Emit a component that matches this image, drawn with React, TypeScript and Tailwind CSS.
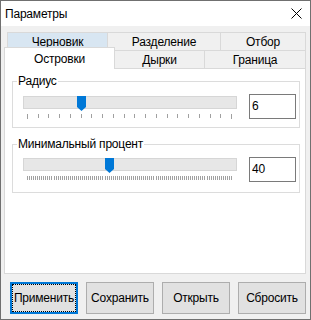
import React from "react";

function Ticks({ count, width, long }: { count: number; width: number; long: boolean }) {
  const span = width - 10;
  const xs: number[] = [];
  for (let i = 0; i < count; i++) xs.push(Math.round(4 + (i * span) / (count - 1)) + 0.5);
  return (
    <svg width={width} height={6} className="block">
      {xs.map((x, i) => (
        <line
          key={i}
          x1={x}
          x2={x}
          y1={0}
          y2={long && (i === 0 || i === count - 1) ? 5 : 4}
          stroke="#a0a0a0"
          strokeWidth={1}
        />
      ))}
    </svg>
  );
}

function Slider({ count, value, min, max }: { count: number; value: number; min: number; max: number }) {
  const width = 214;
  const pos = 4 + ((value - min) / (max - min)) * (width - 10);
  return (
    <div className="w-[214px] flex flex-col">
      <div className="relative h-[13px] bg-[#e7e7e7] border border-[#d6d6d6]">
        <svg
          width="9"
          height="15"
          viewBox="0 0 9 15"
          className="absolute top-[-1px]"
          style={{ left: Math.round(pos) - 5 }}
        >
          <polygon points="0,0 9,0 9,11 4.5,15 0,11" fill="#0078d7" />
        </svg>
      </div>
      <div className="mt-[5px]">
        <Ticks count={count} width={width} long={count < 50} />
      </div>
    </div>
  );
}

function Group({
  label,
  children,
  className,
}: {
  label: string;
  children: React.ReactNode;
  className: string;
}) {
  return (
    <div className={"relative ml-[7px] w-[288px] border border-[#dcdcdc] " + className}>
      <span className="absolute left-[4px] top-[-8px] bg-white px-[1px] leading-[14px]">{label}</span>
      {children}
    </div>
  );
}

function NumBox({ value }: { value: string }) {
  return (
    <div className="w-[47px] h-[25px] border border-[#7a7a7a] bg-white pl-[2px] pt-[4px] leading-[14px]">
      {value}
    </div>
  );
}

function Button({ label, focused }: { label: string; focused?: boolean }) {
  return (
    <div
      className={
        "w-[68px] h-[32px] flex items-center justify-center bg-[#e1e1e1] " +
        (focused
          ? "border-2 border-[#0078d7] outline-1 outline-dotted outline-black -outline-offset-[3px]"
          : "border border-[#adadad]")
      }
    >
      {label}
    </div>
  );
}

export default function App() {
  return (
    <div className="w-[311px] h-[320px] border border-[#707070] bg-[#f0f0f0] flex flex-col font-['Liberation_Sans',Arial,sans-serif] text-[12px] tracking-[-0.2px] text-black leading-none">
      <div className="h-[25px] shrink-0 bg-white flex items-center justify-between pl-[4px] pr-[8px]">
        <span>Параметры</span>
        <svg width="11" height="11" viewBox="0 0 11 11">
          <path d="M0.5 0.5 L10.5 10.5 M10.5 0.5 L0.5 10.5" stroke="#000" strokeWidth="1" />
        </svg>
      </div>

      <div className="mt-[6px] ml-[6px] flex h-[18px]">
        <div className="w-[100px] border-l border-t border-[#d9d9d9] bg-[#d8e6f2] flex items-center justify-center">
          Черновик
        </div>
        <div className="w-[113px] border-l border-t border-[#d9d9d9] flex items-center justify-center">
          Разделение
        </div>
        <div className="w-[86px] border-l border-t border-r border-[#d9d9d9] flex items-center justify-center">
          Отбор
        </div>
      </div>

      <div className="ml-[3px] flex items-end h-[18px]">
        <div className="relative z-10 -mb-px w-[111px] h-[22px] bg-white border-l border-t border-r border-[#d9d9d9] flex items-center justify-center">
          Островки
        </div>
        <div className="w-[90px] h-[18px] border-t border-r border-[#d9d9d9] flex items-center justify-center">
          Дырки
        </div>
        <div className="w-[101px] h-[18px] border-t border-r border-[#d9d9d9] flex items-center justify-center">
          Граница
        </div>
      </div>

      <div className="ml-[3px] w-[302px] h-[206px] bg-white border border-[#d9d9d9] flex flex-col">
        <Group label="Радиус" className="mt-[12px] h-[47px]">
          <div className="flex items-start pl-[10px] pt-[12px]">
            <div className="mt-[2px]">
              <Slider count={20} value={6} min={1} max={20} />
            </div>
            <div className="ml-[12px]">
              <NumBox value="6" />
            </div>
          </div>
        </Group>
        <Group label="Минимальный процент" className="mt-[16px] h-[49px]">
          <div className="flex items-start pl-[10px] pt-[12px]">
            <div className="mt-[1px]">
              <Slider count={101} value={40} min={0} max={100} />
            </div>
            <div className="ml-[12px]">
              <NumBox value="40" />
            </div>
          </div>
        </Group>
      </div>

      <div className="mt-[8px] ml-[9px] flex gap-[8px]">
        <Button label="Применить" focused />
        <Button label="Сохранить" />
        <Button label="Открыть" />
        <Button label="Сбросить" />
      </div>
    </div>
  );
}
